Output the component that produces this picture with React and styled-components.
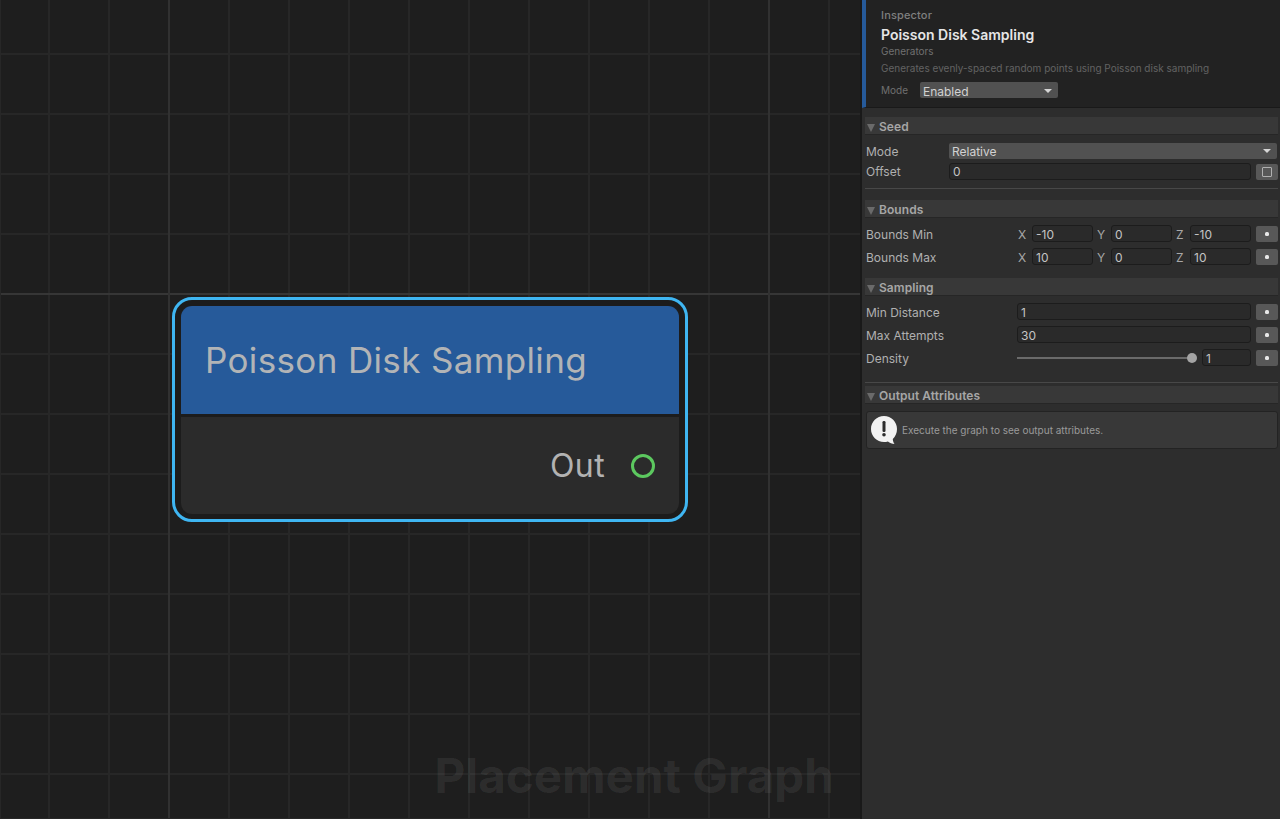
import React from "react";
import styled, { createGlobalStyle, css } from "styled-components";

const GlobalStyle = createGlobalStyle`
  html, body {
    margin: 0;
    padding: 0;
    background: #1e1e1e;
  }
  body {
    font-family: "Inter", "Liberation Sans", sans-serif;
  }
`;

const Page = styled.div`
  width: 1280px;
  height: 819px;
  display: flex;
  overflow: hidden;
`;

const Canvas = styled.div`
  position: relative;
  width: 860px;
  height: 819px;
  flex: none;
  overflow: hidden;
  background-color: #1e1e1e;
  box-shadow: inset 1px 0 0 #272727, inset 0 -1px 0 #272727;
  background-image:
    linear-gradient(to right, #313131 2px, transparent 2px),
    linear-gradient(to bottom, #363636 2px, transparent 2px),
    linear-gradient(to right, #272727 2px, transparent 2px),
    linear-gradient(to bottom, #272727 2px, transparent 2px);
  background-size: 600px 100%, 100% 600px, 60px 100%, 100% 60px;
  background-position: 168px 0, 0 293px, 48px 0, 0 53px;
`;

const Node = styled.div`
  position: absolute;
  left: 172px;
  top: 297px;
  width: 516px;
  height: 225px;
  box-sizing: border-box;
  border: 3px solid #3fb6f2;
  border-radius: 20px;
  background: #1c1c1c;
  padding: 6px 6px 5px;
  display: flex;
  flex-direction: column;
`;

const NodeHeader = styled.div`
  height: 108px;
  flex: none;
  background: #265a9a;
  border-radius: 11px 11px 0 0;
  display: flex;
  align-items: center;
  padding-left: 24px;
  font-size: 35px;
  letter-spacing: 0.35px;
  color: #b2b4b6;
`;

const NodeBody = styled.div`
  flex: 1;
  margin-top: 3px;
  background: #2b2b2b;
  border-radius: 0 0 11px 11px;
  display: flex;
  align-items: center;
  justify-content: flex-end;
  gap: 26px;
  padding-right: 24px;
  font-size: 32px;
  letter-spacing: 0.4px;
  color: #b2b2b2;
`;

const Port = styled.span`
  width: 24px;
  height: 24px;
  box-sizing: border-box;
  border: 3px solid #5cc85f;
  border-radius: 50%;
`;

const Watermark = styled.div`
  position: absolute;
  right: 26px;
  bottom: 15px;
  font-size: 47.6px;
  font-weight: 700;
  color: rgba(255, 255, 255, 0.07);
`;

const Panel = styled.div`
  flex: 1;
  min-width: 0;
  background: #2d2d2d;
  border-left: 2px solid #191919;
  display: flex;
  flex-direction: column;
`;

const InspectorHead = styled.div`
  height: 108px;
  box-sizing: border-box;
  background: #222222;
  border-left: 4px solid #265a9a;
  border-bottom: 1px solid #191919;
  padding: 9px 0 0 15px;
`;

const Eyebrow = styled.div`
  font-size: 11px;
  font-weight: 500;
  letter-spacing: 0.15px;
  line-height: 12px;
  color: #7f7f7f;
`;

const Title = styled.div`
  margin-top: 5px;
  font-size: 14px;
  font-weight: 600;
  line-height: 18px;
  color: #e6e6e6;
`;

const Category = styled.div`
  margin-top: 1px;
  font-size: 10px;
  line-height: 12px;
  color: #707070;
`;

const Description = styled.div`
  margin-top: 5px;
  font-size: 10px;
  line-height: 12px;
  color: #636363;
`;

const ModeRow = styled.div`
  margin-top: 8px;
  display: flex;
  align-items: center;
  gap: 12px;
  font-size: 10px;
  color: #707070;
`;

const Select = styled.div`
  width: ${(p) => p.$width || "auto"};
  flex: ${(p) => (p.$width ? "none" : 1)};
  margin-right: ${(p) => p.$end || 0}px;
  height: 16px;
  box-sizing: border-box;
  background: #515151;
  border-radius: 2px;
  padding: ${(p) => (p.$drop ? 2 : 0)}px 4px 0 3px;
  display: flex;
  align-items: center;
  justify-content: space-between;
  font-size: 12px;
  color: #d2d2d2;
`;

const Caret = styled.span`
  width: 0;
  height: 0;
  border-left: 4px solid transparent;
  border-right: 4px solid transparent;
  border-top: 4px solid #d6d6d6;
  margin-right: 2px;
`;

const Sections = styled.div`
  padding: 9px 2px 0 3px;
  display: flex;
  flex-direction: column;
`;

const SectionHead = styled.div`
  height: 18px;
  box-sizing: border-box;
  margin-top: ${(p) => p.$top || 0}px;
  padding: 2px 0 0 2px;
  background: #383838;
  border-bottom: 1px solid #262626;
  display: flex;
  align-items: center;
  gap: 4px;
  font-size: 12px;
  font-weight: 600;
  letter-spacing: 0.06px;
  color: #a6a6a6;
`;

const Fold = styled.span`
  width: 0;
  height: 0;
  margin-top: 2px;
  border-left: 4.5px solid transparent;
  border-right: 4.5px solid transparent;
  border-top: 8px solid #6a6a6a;
`;

const Row = styled.div`
  height: ${(p) => p.$height || 17}px;
  display: flex;
  align-items: center;
`;

const Label = styled.div`
  width: ${(p) => p.$width}px;
  flex: none;
  font-size: 12px;
  color: #b0b0b0;
`;

const Input = styled.div`
  flex: ${(p) => (p.$width ? "none" : 1)};
  width: ${(p) => (p.$width ? `${p.$width}px` : "auto")};
  height: 17px;
  box-sizing: border-box;
  background: #2a2a2a;
  border: 1px solid #1c1c1c;
  border-radius: 3px;
  padding-left: 3px;
  display: flex;
  align-items: center;
  font-size: 12px;
  color: #c4c4c4;
`;

const Axis = styled.span`
  width: 15px;
  flex: none;
  font-size: 12px;
  color: #a8a8a8;
  margin-left: ${(p) => p.$left || 0}px;
  padding-left: 1px;
  box-sizing: border-box;
`;

const Rows = styled.div`
  padding: ${(p) => p.$top || 7}px 0 0 1px;
  display: flex;
  flex-direction: column;
  gap: ${(p) => p.$gap || 6}px;
  ${(p) =>
    p.$drop &&
    css`
      ${Label}, ${Input}, ${Axis} {
        padding-top: 2px;
      }
    `}
`;

const IconButton = styled.div`
  width: 22px;
  height: 16px;
  flex: none;
  margin-left: 5px;
  background: #585858;
  border-radius: 2px;
  display: flex;
  align-items: center;
  justify-content: center;
`;

const Dot = styled.span`
  width: 4px;
  height: 4px;
  background: #e8e8e8;
  border-radius: 1.5px;
`;

const Square = styled.span`
  width: 10px;
  height: 10px;
  box-sizing: border-box;
  border: 1px solid #b0b0b0;
  border-radius: 1px;
`;

const Divider = styled.div`
  height: 1px;
  margin-top: ${(p) => p.$top}px;
  background: #484848;
`;

const Slider = styled.div`
  width: 180px;
  flex: none;
  margin-right: 5px;
  display: flex;
  align-items: center;
`;

const Track = styled.div`
  flex: 1;
  height: 2px;
  background: #6a6a6a;
`;

const Thumb = styled.span`
  width: 10px;
  height: 10px;
  margin-left: -1px;
  background: #a4a4a4;
  border-radius: 50%;
`;

const HelpBox = styled.div`
  height: 38px;
  box-sizing: border-box;
  margin: 7px 0 0 1px;
  background: #383838;
  border: 1px solid #232323;
  border-radius: 3px;
  display: flex;
  align-items: center;
  gap: 5px;
  padding-left: 4px;
  font-size: 10px;
  color: #9a9a9a;
`;

const HelpIcon = () => (
  <svg width="26" height="28" viewBox="0 0 26 28">
    <path
      d="M13 0C5.800 0 0 5.800 0 13s5.800 13 13 13c1.400 0 2.700-.2 3.900-.6 1.900 1.300 4.200 2.300 6.600 2.600-1-1.500-1.600-3.200-1.700-5.100C24.400 20.500 26 17 26 13 26 5.800 20.200 0 13 0z"
      fill="#f2f2f2"
    />
    <rect x="11.500" y="5" width="3" height="11" rx="1.200" fill="#2d2d2d" />
    <circle cx="13" cy="18.700" r="1.800" fill="#2d2d2d" />
  </svg>
);

const vectorRows = [
  { name: "Bounds Min", x: "-10", y: "0", z: "-10" },
  { name: "Bounds Max", x: "10", y: "0", z: "10" },
];

const App = () => (
  <Page>
    <GlobalStyle />
    <Canvas>
      <Node>
        <NodeHeader>Poisson Disk Sampling</NodeHeader>
        <NodeBody>
          Out
          <Port />
        </NodeBody>
      </Node>
      <Watermark>Placement Graph</Watermark>
    </Canvas>
    <Panel>
      <InspectorHead>
        <Eyebrow>Inspector</Eyebrow>
        <Title>Poisson Disk Sampling</Title>
        <Category>Generators</Category>
        <Description>Generates evenly-spaced random points using Poisson disk sampling</Description>
        <ModeRow>
          Mode
          <Select $width="138px" $drop>
            Enabled
            <Caret />
          </Select>
        </ModeRow>
      </InspectorHead>
      <Sections>
        <SectionHead>
          <Fold />
          Seed
        </SectionHead>
        <Rows $top={8} $gap={4}>
          <Row $height={16}>
            <Label $width={83}>Mode</Label>
            <Select $end={1}>
              Relative
              <Caret />
            </Select>
          </Row>
          <Row>
            <Label $width={83}>Offset</Label>
            <Input>0</Input>
            <IconButton>
              <Square />
            </IconButton>
          </Row>
        </Rows>
        <Divider $top={8} />
        <SectionHead $top={11}>
          <Fold />
          Bounds
        </SectionHead>
        <Rows $drop>
          {vectorRows.map((r) => (
            <Row key={r.name}>
              <Label $width={151}>{r.name}</Label>
              <Axis>X</Axis>
              <Input $width={61}>{r.x}</Input>
              <Axis $left={3}>Y</Axis>
              <Input $width={61}>{r.y}</Input>
              <Axis $left={3}>Z</Axis>
              <Input $width={61}>{r.z}</Input>
              <IconButton>
                <Dot />
              </IconButton>
            </Row>
          ))}
        </Rows>
        <SectionHead $top={13}>
          <Fold />
          Sampling
        </SectionHead>
        <Rows $drop>
          <Row>
            <Label $width={151}>Min Distance</Label>
            <Input>1</Input>
            <IconButton>
              <Dot />
            </IconButton>
          </Row>
          <Row>
            <Label $width={151}>Max Attempts</Label>
            <Input>30</Input>
            <IconButton>
              <Dot />
            </IconButton>
          </Row>
          <Row>
            <Label $width={151}>Density</Label>
            <Slider>
              <Track />
              <Thumb />
            </Slider>
            <Input>1</Input>
            <IconButton>
              <Dot />
            </IconButton>
          </Row>
        </Rows>
        <Divider $top={16} />
        <SectionHead $top={3}>
          <Fold />
          Output Attributes
        </SectionHead>
        <HelpBox>
          <HelpIcon />
          Execute the graph to see output attributes.
        </HelpBox>
      </Sections>
    </Panel>
  </Page>
);

export default App;
